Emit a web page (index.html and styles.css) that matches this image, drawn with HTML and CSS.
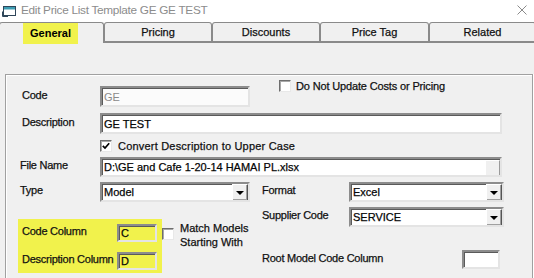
FILE: index.html
```html
<!DOCTYPE html>
<html lang="en">
<head>
    <meta charset="UTF-8">
    <title>Edit Price List Template</title>
    <link rel="stylesheet" href="styles.css">
</head>
<body>
<div class="window">
    <!-- title bar -->
    <div class="titlebar">
        <svg class="app-icon" width="14" height="11" viewBox="0 0 14 11">
            <rect x="1.5" y="0.5" width="12" height="9" fill="#fff" stroke="#2f4659"/>
            <rect x="2" y="1" width="11" height="2.5" fill="#3d9db3"/>
            <path d="M0.5 5.5 V10.5 H6" fill="none" stroke="#2f4659"/>
        </svg>
        <span class="title">Edit Price List Template GE GE TEST</span>
        <svg class="close" width="10" height="10" viewBox="0 0 10 10">
            <path d="M0.5 0.5 L9.5 9.5 M9.5 0.5 L0.5 9.5" stroke="#8a8a8a" stroke-width="1"/>
        </svg>
    </div>

    <!-- tabs -->
    <div class="tabs">
        <div class="tab tab-active"><span class="hl">General</span></div>
        <div class="tab">Pricing</div>
        <div class="tab">Discounts</div>
        <div class="tab tab-wide">Price Tag</div>
        <div class="tab tab-last">Related</div>
    </div>

    <div class="page">
        <div class="group">
            <div class="row row-code">
                <span class="lbl">Code</span>
                <div class="field w150 h21 disabled">GE</div>
                <div class="check-item check-top">
                    <span class="checkbox"></span>
                    <span>Do Not Update Costs or Pricing</span>
                </div>
            </div>

            <div class="row row-desc">
                <span class="lbl">Description</span>
                <div class="field w402 h21">GE TEST</div>
            </div>

            <div class="row row-upper">
                <div class="check-item">
                    <span class="checkbox">
                        <svg width="8" height="8" viewBox="0 0 8 8"><path d="M0.8 3.8 L3 6 L7.2 1.2" fill="none" stroke="#000" stroke-width="1.7"/></svg>
                    </span>
                    <span class="upper-text">Convert Description to Upper Case</span>
                </div>
            </div>

            <div class="row row-file">
                <span class="lbl lbl-out">File Name</span>
                <div class="field w402 h20 field-file">
                    <span>D:\GE and Cafe 1-20-14 HAMAI PL.xlsx</span>
                    <span class="browse"></span>
                </div>
            </div>

            <div class="lower">
                <div class="col-left">
                    <div class="row">
                        <span class="lbl lbl-out">Type</span>
                        <div class="field select w150 h20">
                            <span>Model</span>
                            <span class="drop"><span class="arrow"></span></span>
                        </div>
                    </div>

                    <div class="highlight-wrap">
                        <div class="highlight">
                            <div class="row">
                                <span class="lbl lbl-col">Code Column</span>
                                <div class="field w40 h18 yellow">C</div>
                            </div>
                            <div class="row row-d">
                                <span class="lbl lbl-col">Description Column</span>
                                <div class="field w40 h18 yellow">D</div>
                            </div>
                        </div>
                        <div class="check-item check-match">
                            <span class="checkbox"></span>
                            <span class="two-lines">Match Models<br>Starting With</span>
                        </div>
                    </div>
                </div>

                <div class="col-right">
                    <div class="row">
                        <span class="lbl lbl-r">Format</span>
                        <div class="field select w155 h20">
                            <span>Excel</span>
                            <span class="drop"><span class="arrow"></span></span>
                        </div>
                    </div>
                    <div class="row row-supplier">
                        <span class="lbl lbl-r">Supplier Code</span>
                        <div class="field select w155 h20">
                            <span>SERVICE</span>
                            <span class="drop"><span class="arrow"></span></span>
                        </div>
                    </div>
                    <div class="row row-root">
                        <span class="lbl lbl-root">Root Model Code Column</span>
                        <div class="field w38 h19"></div>
                    </div>
                </div>
            </div>
        </div>
    </div>
</div>
</body>
</html>
```

FILE: styles.css
```css
/* --------------------
 Edit price list template dialog
 -------------------- */

:root {
    --face: #f0f0f0;
    --line: #8a8a8a;
    --yellow: #f1f24c;
}

* {
    box-sizing: border-box;
}

body {
    margin: 0;
    width: 534px;
    height: 278px;
    overflow: hidden;
    background: var(--face);
    font-family: "Liberation Sans", Arial, sans-serif;
    font-size: 11px;
    color: #111;
    -webkit-text-stroke: 0.25px #111;
}

.window {
    height: 278px;
    overflow: hidden;
}

/* title bar */
.titlebar {
    height: 22px;
    background: #fff;
    display: flex;
    align-items: center;
    padding-bottom: 3px;
}

.app-icon {
    margin-left: 2px;
    margin-top: 3px;
}

.title {
    margin-left: 5px;
    font-size: 11.8px;
    color: #8c8c8c;
    -webkit-text-stroke: 0;
    letter-spacing: -0.3px;
}

.close {
    margin-left: auto;
    margin-right: 7px;
    margin-top: 1px;
}

/* tabs */
.tabs {
    display: flex;
    height: 21px;
    background: #fff;
}

.tab {
    width: 108px;
    flex: none;
    background: var(--face);
    border: 1px solid var(--line);
    border-bottom: 2px solid var(--line);
    border-radius: 3px 3px 0 0;
    text-align: center;
    line-height: 18px;
}

.tab-active {
    width: 105px;
    margin-left: -1px;
    border-bottom: none;
    font-weight: bold;
    -webkit-text-stroke: 0;
}

.tab-wide {
    width: 109px;
}

.tab-last {
    flex: 1;
    margin-right: -2px;
}

.hl {
    display: inline-block;
    background: var(--yellow);
    width: 55px;
    height: 21px;
    line-height: 20px;
    margin-left: -2px;
    color: #000;
}

/* page */
.page {
    padding: 31px 1px 0 5px;
}

.group {
    height: 204px;
    border: 1px solid #a0a0a0;
    border-bottom: none;
    box-shadow: inset 1px 1px 0 #fff, 1px 0 0 #fff;
    padding-left: 16px;
}

.row {
    display: flex;
    align-items: center;
}

.lbl {
    width: 78px;
    flex: none;
    margin-bottom: 4px;
    white-space: nowrap;
    letter-spacing: -0.25px;
}

.lbl-out {
    width: 80px;
    margin-left: -2px;
}

.lbl-col {
    width: 95px;
}

.lbl-r {
    width: 87px;
}

.lbl-root {
    width: 200px;
}

.row-code {
    margin-top: 11px;
}

.row-desc {
    margin-top: 6px;
}

.row-upper {
    margin-top: 6px;
    padding-left: 78px;
    height: 12px;
}

.upper-text {
    letter-spacing: 0.2px;
}

.row-file {
    margin-top: 5px;
}

/* inputs */
.field {
    flex: none;
    display: flex;
    align-items: center;
    background: #fff;
    border: 2px solid;
    border-color: #8c8c8c #e4e4e4 #e4e4e4 #8c8c8c;
    box-shadow: inset 1px 1px 0 #5a5a5a;
    padding-left: 2px;
    white-space: nowrap;
    overflow: hidden;
    color: #000;
}

.disabled {
    color: #8a8a8a;
    -webkit-text-stroke: 0;
    background: #fbfbfb;
}

.yellow {
    background: var(--yellow);
}

.w38 { width: 38px; }
.w40 { width: 40px; }
.w150 { width: 150px; }
.w155 { width: 155px; }
.w402 { width: 402px; }
.h18 { height: 18px; }
.h19 { height: 19px; }
.h20 { height: 20px; }
.h21 { height: 21px; }

.field-file,
.select {
    justify-content: space-between;
    padding-right: 0;
}

.browse {
    width: 15px;
    height: 16px;
    background: var(--face);
    border: 1px solid;
    border-color: #fff #9a9a9a #9a9a9a #fff;
    margin-top: 1px;
}

.drop {
    width: 16px;
    height: 17px;
    margin-top: 1px;
    background: var(--face);
    border: 1px solid;
    border-color: #fff #555 #555 #fff;
    box-shadow: inset -1px -1px 0 #a0a0a0;
    display: flex;
    align-items: center;
    justify-content: center;
}

.arrow {
    width: 0;
    height: 0;
    border-left: 4px solid transparent;
    border-right: 4px solid transparent;
    border-top: 4px solid #000;
    margin-top: 1px;
}

/* check boxes */
.check-item {
    display: flex;
    align-items: center;
    gap: 6px;
    white-space: nowrap;
}

.checkbox {
    flex: none;
    width: 12px;
    height: 12px;
    background: #fff;
    border: 1px solid;
    border-color: #6e6e6e #e8e8e8 #e8e8e8 #6e6e6e;
    box-shadow: inset 1px 1px 0 #a8a8a8;
    display: flex;
    align-items: center;
    justify-content: center;
}

.check-top {
    align-self: flex-start;
    margin-top: -6px;
    margin-left: 29px;
    gap: 5px;
    letter-spacing: -0.15px;
}

/* lower part */
.lower {
    display: flex;
    margin-top: 5px;
}

.col-left {
    width: 240px;
    flex: none;
}

.highlight-wrap {
    display: flex;
    align-items: flex-start;
    margin-top: 17px;
    margin-left: -4px;
}

.highlight {
    width: 144px;
    background: var(--yellow);
    padding: 5px 0 3px 4px;
}

.row-d {
    margin-top: 10px;
}

.check-match {
    align-items: flex-start;
    margin-top: 9px;
    gap: 6px;
}

.two-lines {
    line-height: 14px;
    margin-top: -7px;
}

.row-supplier {
    margin-top: 5px;
}

.row-root {
    margin-top: 23px;
}
```
